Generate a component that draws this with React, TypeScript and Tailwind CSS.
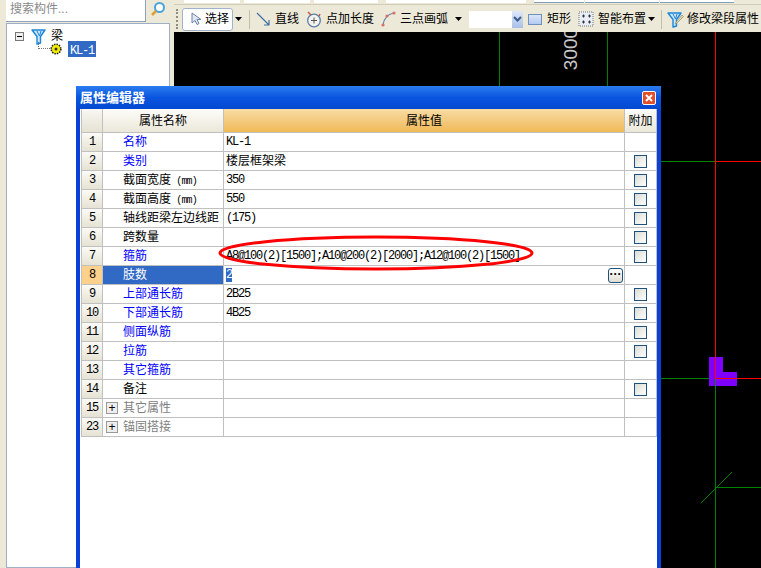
import React from "react";

const cjk = "font-['Liberation_Sans','Noto_Sans_CJK_SC',sans-serif]";

// latin text in the old bitmap font is 6px per char
const Latin = ({ children }: { children: React.ReactNode }) => (
  <span className="font-['Liberation_Mono',monospace] text-[12px] tracking-[-1.2px]">{children}</span>
);

type Row = {
  no: number;
  name: React.ReactNode;
  value?: string | React.ReactNode;
  blue?: boolean;
  check?: boolean;
  group?: boolean;
  selected?: boolean;
};

const rows: Row[] = [
  { no: 1, name: "名称", value: <Latin>KL-1</Latin>, blue: true },
  { no: 2, name: "类别", value: "楼层框架梁", blue: true, check: true },
  { no: 3, name: <>截面宽度<span className="font-['Liberation_Mono',monospace] text-[10px] tracking-[-0.8px]"> (mm)</span></>, value: <Latin>350</Latin>, check: true },
  { no: 4, name: <>截面高度<span className="font-['Liberation_Mono',monospace] text-[10px] tracking-[-0.8px]"> (mm)</span></>, value: <Latin>550</Latin>, check: true },
  { no: 5, name: "轴线距梁左边线距", value: <Latin>(175)</Latin>, check: true },
  { no: 6, name: "跨数量", check: true },
  { no: 7, name: "箍筋", value: <Latin>A8@100(2)[1500];A10@200(2)[2000];A12@100(2)[1500]</Latin>, blue: true, check: true },
  { no: 8, name: "肢数", selected: true },
  { no: 9, name: "上部通长筋", value: <Latin>2B25</Latin>, blue: true, check: true },
  { no: 10, name: "下部通长筋", value: <Latin>4B25</Latin>, blue: true, check: true },
  { no: 11, name: "侧面纵筋", blue: true, check: true },
  { no: 12, name: "拉筋", blue: true, check: true },
  { no: 13, name: "其它箍筋", blue: true },
  { no: 14, name: "备注", check: true },
  { no: 15, name: "其它属性", group: true },
  { no: 23, name: "锚固搭接", group: true },
];

const Arrow = ({ className }: { className: string }) => (
  <svg width="7" height="4" viewBox="0 0 7 4" className={className}>
    <path d="M0 0h7L3.5 4z" fill="#000" />
  </svg>
);

const Funnel = ({ className, pencil }: { className?: string; pencil?: boolean }) => (
  <svg width="17" height="17" viewBox="0 0 17 17" className={className}>
    <path d="M1 2h13L9.500 8.500V15L6 16V8.500z" fill="#cfe6fa" stroke="#1c86d8" strokeWidth="1.4" strokeLinejoin="round" />
    <path d="M6 3l2.500 5M10 3L8.500 8" stroke="#1c86d8" strokeWidth="1" fill="none" />
    {pencil && <path d="M9 11l6-7 1.500 1.500-6.500 6.500-2 1z" fill="#e8d9a8" stroke="#8a8a70" strokeWidth="0.7" />}
  </svg>
);

const Tool = ({ icon, label, className }: { icon: React.ReactNode; label: string; className?: string }) => (
  <div className={`flex items-center ${className ?? ""}`}>
    {icon}
    <span className="text-[12px] text-black leading-none whitespace-nowrap">{label}</span>
  </div>
);

const Toolbar = () => (
  <div className="h-8 bg-[#ece9d8] shrink-0 flex flex-col">
    <div className="h-[3px] flex items-start">
      <div className="ml-[10px] w-[56px] h-[3px] bg-white" />
      <div className="ml-1 w-[66px] h-[3px] bg-white" />
      <div className="ml-1 w-[64px] h-[3px] bg-white" />
      <div className="ml-[8px] w-[140px] h-[3px] bg-white" />
      <div className="ml-[8px] w-[50px] h-[3px] bg-white border-b border-[#7f9db9]" />
      <div className="ml-px w-[74px] h-[3px] bg-white border-b border-[#7f9db9]" />
      <div className="ml-px w-[74px] h-[3px] bg-white border-b border-[#7f9db9]" />
    </div>
    <div className="h-[2px] border-b border-[#d0ccb8]" />
    <div className="flex-1 flex items-center pt-[1px]">
      <div className="ml-[2px] w-[3px] h-5 border-l-2 border-dotted border-[#8d8d80]" />
      <div className="ml-[3px] w-[51px] h-[23px] bg-white border border-[#9fb4cc] rounded-[3px] flex items-center">
        <svg width="12" height="14" viewBox="0 0 12 14" className="ml-[7px]">
          <path d="M2 1v10l3-2.500 2 4 2-1-2-4h4z" fill="#dfe7f2" stroke="#6d83a8" strokeWidth="1" />
        </svg>
        <span className="ml-[3px] text-[12px] leading-none">选择</span>
      </div>
      <Arrow className="ml-[2px]" />
      <div className="ml-[7px] w-px h-[19px] bg-[#c2bea8]" />
      <Tool
        className="ml-[6px]"
        label="直线"
        icon={
          <svg width="15" height="15" viewBox="0 0 15 15" className="mr-[4px]">
            <path d="M1 1l12 12M13 8v5H8" stroke="#3f6ea8" strokeWidth="1.2" fill="none" />
          </svg>
        }
      />
      <Tool
        className="ml-[7px]"
        label="点加长度"
        icon={
          <svg width="16" height="17" viewBox="0 0 16 17" className="mr-[4px]">
            <circle cx="8" cy="9.500" r="6.300" fill="#f4f4ec" stroke="#5a7fa8" strokeWidth="1.3" />
            <path d="M8 6.500v6M5 9.500h6" stroke="#555" strokeWidth="1" />
            <path d="M2 1l3 3M14 3l-1 2" stroke="#c05a4a" strokeWidth="1.5" />
          </svg>
        }
      />
      <Tool
        className="ml-[7px]"
        label="三点画弧"
        icon={
          <svg width="15" height="16" viewBox="0 0 15 16" className="mr-[4px]">
            <path d="M2 14C3 7 7 3 13 2" stroke="#5a7fa8" strokeWidth="1.2" fill="none" />
            <circle cx="2" cy="14" r="1.600" fill="#d8736a" />
            <circle cx="6" cy="5" r="1.600" fill="#d8736a" />
            <circle cx="13" cy="2" r="1.600" fill="#d8736a" />
          </svg>
        }
      />
      <Arrow className="ml-[7px]" />
      <div className="ml-[7px] w-[54px] h-[17px] bg-white flex justify-end">
        <div className="w-[11px] h-[17px] bg-gradient-to-b from-[#dfe8f8] to-[#a9bfe8] flex items-center justify-center">
          <svg width="9" height="6" viewBox="0 0 9 6">
            <path d="M1 1l3.500 3.500L8 1" stroke="#3b5a8f" strokeWidth="2" fill="none" />
          </svg>
        </div>
      </div>
      <Tool
        className="ml-[5px]"
        label="矩形"
        icon={<div className="w-[14px] h-[11px] mr-[5px] border border-[#6f8fc0] bg-gradient-to-b from-[#dbe6f8] to-[#b4caf0]" />}
      />
      <Tool
        className="ml-[7px]"
        label="智能布置"
        icon={
          <svg width="16" height="16" viewBox="0 0 16 16" className="mr-[4px]">
            <rect x="1" y="1" width="14" height="14" fill="#e8eef6" stroke="#777" strokeDasharray="1 1" />
            <path d="M4 5h3M5.500 3.500v3M10 5h3M11.500 3.500v3M4 11h3M5.500 9.500v3M10 11h3M11.500 9.500v3" stroke="#333" strokeWidth="1" />
          </svg>
        }
      />
      <Arrow className="ml-[2px]" />
      <div className="ml-[6px] w-px h-[19px] bg-[#c2bea8]" />
      <Tool className="ml-[5px]" label="修改梁段属性" icon={<Funnel pencil className="mr-[3px]" />} />
    </div>
  </div>
);

const Tree = () => (
  <div className="w-[172px] shrink-0 bg-[#ece9d8] pl-[6px] pr-[2px] flex flex-col">
    <div className="h-[23px] flex items-start shrink-0">
      <div className="w-[140px] h-[22px] bg-white border-r border-b border-[#8ea4bf] pl-[4px] text-[12px] leading-[18px] text-[#8a8a8a] whitespace-nowrap">
        搜索构件...
      </div>
      <div className="ml-[4px] w-[16px] h-[18px] flex items-center">
        <svg width="16" height="16" viewBox="0 0 16 16">
          <circle cx="9.500" cy="6.500" r="4.500" fill="#fff" stroke="#4ba3dc" strokeWidth="2" />
          <path d="M6 10l-4 4" stroke="#e0a030" strokeWidth="2.500" />
        </svg>
      </div>
    </div>
    <div className="flex-1 bg-white border border-[#9db0c8] pl-[8px] pt-[4px]">
      <div className="flex items-center h-[16px]">
        <div className="w-[9px] h-[9px] border border-[#777] bg-[#eee] flex items-center justify-center">
          <div className="w-[5px] h-px bg-black" />
        </div>
        <Funnel className="ml-[7px]" />
        <span className="ml-[3px] text-[12px] leading-none">梁</span>
      </div>
      <div className="flex items-center h-[16px] mt-[-3px] ml-[23px]">
        <div className="w-[12px] h-[7px] mt-[-7px] border-l border-b border-dotted border-[#777]" />
        <svg width="12" height="12" viewBox="0 0 12 12">
          <circle cx="6" cy="6" r="4.800" fill="#f6ee00" stroke="#222" strokeWidth="1.6" strokeDasharray="1.500 1" />
          <circle cx="6" cy="6" r="1.500" fill="#333" />
        </svg>
        <div className="ml-[6px] w-[28px] h-[16px] bg-[#316ac5] text-white pl-[2px] leading-[16px]">
          <Latin>KL-1</Latin>
        </div>
      </div>
    </div>
  </div>
);

const Canvas = () => (
  <div className="flex-1 relative bg-black overflow-hidden">
    <div className="absolute left-[325px] top-0 w-px h-[60px] bg-[#008000]" />
    <div className="absolute left-[433px] top-0 w-px h-[60px] bg-[#008000]" />
    <div className="absolute left-[487px] top-[129px] w-[54px] h-px bg-[#008000]" />
    <div className="absolute left-[487px] top-[346px] w-[54px] h-px bg-[#008000]" />
    <div className="absolute left-[535px] top-[325px] w-[14px] h-[29px] bg-[#8000ff]" />
    <div className="absolute left-[535px] top-[340px] w-[28px] h-[14px] bg-[#8000ff]" />
    <div className="absolute left-[541px] top-[455px] w-[46px] h-px bg-[#008000]" />
    <div className="absolute left-[541px] top-[346px] w-px h-[190px] bg-[#008000]" />
    <div className="absolute left-[541px] top-0 w-px h-[346px] bg-[#ff0000]" />
    <div className="absolute left-[541px] top-[129px] w-[46px] h-px bg-[#ff0000]" />
    <div className="absolute left-[541px] top-[346px] w-[46px] h-px bg-[#ff0000]" />
    <svg width="32" height="32" viewBox="0 0 32 32" shapeRendering="crispEdges" className="absolute left-[526px] top-[440px]">
      <path d="M0.500 31.500L31.500 0.500" stroke="#008000" strokeWidth="1" />
    </svg>
    <span className="absolute left-[376px] top-[6px] font-['Liberation_Sans',sans-serif] text-[19px] leading-[22px] text-[#c8c8c8] -rotate-90">
      3000
    </span>
  </div>
);

const NoCell = ({ row }: { row: Row }) => (
  <div
    className={`border-r border-b border-[#c0c0c0] flex items-center justify-center ${
      row.selected ? "bg-[#fdd08c]" : "bg-gradient-to-b from-[#fbfaf6] to-[#e6e3d4]"
    }`}
  >
    <Latin>{row.no}</Latin>
  </div>
);

const PropertyWindow = () => (
  <div className="absolute left-[76px] top-[86px] w-[585px] h-[482px] bg-white flex flex-col border-x-[4px] border-[#0a3fd8]">
    <div className="-mx-[4px] h-[23px] shrink-0 bg-gradient-to-b from-[#2a7cf0] via-[#0a55e0] to-[#0448d0] flex items-center pl-[4px] pr-[5px] justify-between">
      <span className="text-[13px] font-bold text-white leading-none">属性编辑器</span>
      <div className="w-[14px] h-[14px] bg-[#e0502c] border border-white rounded-[2px] flex items-center justify-center">
        <svg width="8" height="8" viewBox="0 0 8 8">
          <path d="M1 1l6 6M7 1L1 7" stroke="#fff" strokeWidth="2" />
        </svg>
      </div>
    </div>
    <div className="ml-[1px] grid grid-cols-[21px_121px_401px_32px] grid-rows-[24px] auto-rows-[19px] border-l border-[#c0c0c0] w-[576px]">
      <div className="border-r border-b border-[#c0c0c0] bg-gradient-to-b from-[#f8f7f2] to-[#e6e3d4]" />
      <div className="border-r border-b border-[#c0c0c0] bg-gradient-to-b from-[#fdfcf8] to-[#ebe8da] flex items-center justify-center text-[12px]">
        属性名称
      </div>
      <div className="border-r border-b border-[#c0c0c0] bg-gradient-to-b from-[#f8dca4] to-[#f0b955] flex items-center justify-center text-[12px]">
        属性值
      </div>
      <div className="border-r border-b border-[#c0c0c0] bg-gradient-to-b from-[#fdfcf8] to-[#ebe8da] flex items-center justify-center text-[12px]">
        附加
      </div>
      {rows.map((row) => (
        <React.Fragment key={row.no}>
          <NoCell row={row} />
          <div
            className={`border-r border-b border-[#c0c0c0] flex items-center text-[12px] whitespace-nowrap ${
              row.group ? "pl-[3px] text-[#808080]" : "pl-5"
            } ${row.selected ? "bg-[#316ac5] !text-white" : ""} ${row.blue ? "text-[#0000ff]" : ""}`}
          >
            {row.group && (
              <div className="w-[12px] h-[12px] mr-[5px] border border-[#999] bg-[#eee] flex items-center justify-center text-black text-[12px] leading-none">
                +
              </div>
            )}
            <span className="whitespace-pre">{row.name}</span>
          </div>
          <div className="relative border-r border-b border-[#c0c0c0] flex items-center pl-[2px] text-[12px] whitespace-nowrap">
            {row.selected ? (
              <span className="bg-[#316ac5] text-white leading-[14px] h-[14px] flex items-center">
                <Latin>2</Latin>
              </span>
            ) : (
              row.value
            )}
            {row.selected && (
              <div className="absolute right-[1px] top-[2px] w-[15px] h-[15px] rounded-[3px] border border-[#1c5180] bg-gradient-to-b from-white to-[#e0ddd0] flex items-center justify-center text-[12px] font-bold leading-[8px] pb-[3px]">
                ···
              </div>
            )}
          </div>
          <div className="border-r border-b border-[#c0c0c0] flex items-center justify-center">
            {row.check && <div className="w-[13px] h-[13px] border border-[#1c5180] bg-gradient-to-br from-[#dcdcd4] to-white" />}
          </div>
        </React.Fragment>
      ))}
    </div>
    <svg width="330" height="50" viewBox="0 0 330 50" className="absolute left-[135px] top-[142px]">
      <ellipse cx="161" cy="25" rx="156" ry="16" fill="none" stroke="#ff0000" strokeWidth="3" />
    </svg>
  </div>
);

export default function App() {
  return (
    <div className={`relative w-[761px] h-[568px] overflow-hidden flex bg-[#ece9d8] text-black ${cjk}`}>
      <Tree />
      <div className="flex-1 flex flex-col pl-[2px]">
        <Toolbar />
        <Canvas />
      </div>
      <PropertyWindow />
    </div>
  );
}
